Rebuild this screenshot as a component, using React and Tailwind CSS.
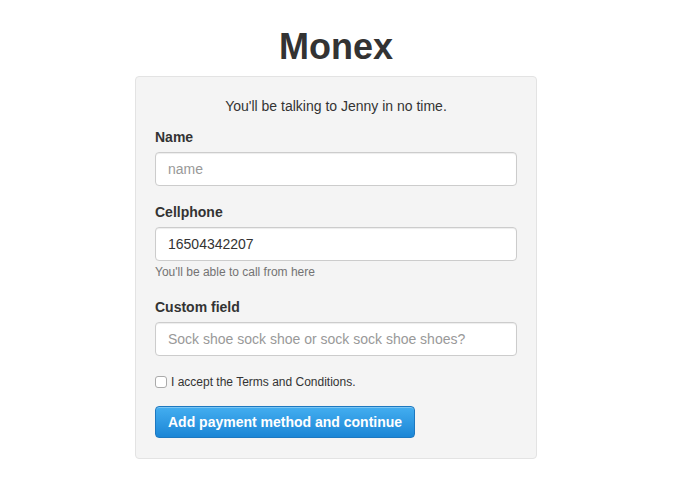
export default function App() {
  const font = { fontFamily: '"Liberation Sans", Arial, sans-serif' };
  return (
    <div className="min-h-[494px] w-full bg-white text-[#333]" style={font}>
      <div className="flex flex-col items-center pt-[26px] pr-[23px]">
        <h1 className="text-[36px] leading-[42px] font-bold text-[#333] mb-[8px]">Monex</h1>
        <div className="w-[402px] bg-[#f4f4f4] border border-[#e3e3e3] rounded-[4px] px-[19px] pt-[19px] pb-[20px]">
          <p className="text-center text-[14px] leading-[20px] mb-[11px]">You'll be talking to Jenny in no time.</p>
          <label className="block text-[14px] leading-[20px] font-bold mb-[5px]">Name</label>
          <input
            className="block w-full h-[34px] px-[12px] text-[14px] bg-white border border-[#ccc] rounded-[4px] shadow-[inset_0_1px_1px_rgba(0,0,0,0.075)] placeholder:text-[#999] outline-none"
            placeholder="name"
          />
          <label className="block text-[14px] leading-[20px] font-bold mt-[16px] mb-[5px]">Cellphone</label>
          <input
            className="block w-full h-[34px] px-[12px] text-[14px] text-[#333] bg-white border border-[#ccc] rounded-[4px] shadow-[inset_0_1px_1px_rgba(0,0,0,0.075)] outline-none"
            defaultValue="16504342207"
          />
          <p className="text-[12px] leading-[16px] text-[#737373] mt-[3px]">You'll be able to call from here</p>
          <label className="block text-[14px] leading-[20px] font-bold mt-[17px] mb-[5px]">Custom field</label>
          <input
            className="block w-full h-[34px] px-[12px] text-[14px] bg-white border border-[#ccc] rounded-[4px] shadow-[inset_0_1px_1px_rgba(0,0,0,0.075)] placeholder:text-[#999] outline-none"
            placeholder="Sock shoe sock shoe or sock sock shoe shoes?"
          />
          <label className="flex items-center gap-[4px] mt-[18px] text-[12px] leading-[16px] text-[#333]">
            <span className="inline-block w-[12px] h-[12px] border border-[#aaa] rounded-[3px] bg-white"></span>
            I accept the Terms and Conditions.
          </label>
          <button className="mt-[16px] h-[32px] px-[12px] rounded-[4px] border border-[#1d78c0] bg-gradient-to-b from-[#43aef0] to-[#1a86d6] text-white text-[14px] font-bold shadow-[inset_0_1px_0_rgba(255,255,255,0.3)]">
            Add payment method and continue
          </button>
        </div>
      </div>
    </div>
  );
}
